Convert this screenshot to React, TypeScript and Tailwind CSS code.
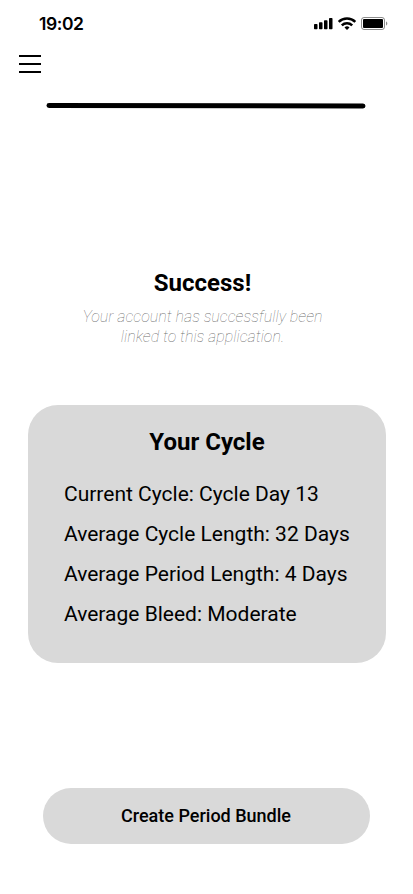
const cycleStats = [
  'Current Cycle: Cycle Day 13',
  'Average Cycle Length: 32 Days',
  'Average Period Length: 4 Days',
  'Average Bleed: Moderate',
];

function StatusIcons() {
  return (
    <svg width="74" height="14" viewBox="0 0 74 14" fill="none">
      <g fill="#000">
        <rect x="0" y="7" width="3.5" height="5.2" rx="0.7" />
        <rect x="5" y="5.2" width="3.5" height="7" rx="0.7" />
        <rect x="10" y="3.2" width="3.5" height="9" rx="0.7" />
        <rect x="15" y="1" width="3.5" height="11.2" rx="0.7" />
      </g>
      <g stroke="#000" strokeWidth="2.5">
        <path d="M24.7 4.8a12 12 0 0 1 16.6 0" />
        <path d="M27.8 8.3a7.6 7.6 0 0 1 10.4 0" />
      </g>
      <path d="M33 13l-2.5-2.6a3.8 3.8 0 0 1 5 0z" fill="#000" />
      <rect x="47.5" y="0.5" width="23" height="12" rx="2.5" stroke="#000" strokeOpacity="0.45" />
      <rect x="49" y="2" width="20" height="9" rx="1" fill="#000" />
      <path d="M72 4.5v4c.8-.3 1.3-1.1 1.3-2s-.5-1.7-1.3-2z" fill="#000" fillOpacity="0.45" />
    </svg>
  );
}

export default function App() {
  return (
    <div className="flex h-[894px] w-[413px] flex-col overflow-hidden bg-white font-['Roboto',sans-serif] text-black">
      {/* Status bar */}
      <div className="flex h-[47px] shrink-0 items-center justify-between pl-[39px] pr-[25px]">
        <span className="pt-px font-['Inter',sans-serif] text-[17.5px] font-semibold tracking-[-0.4px]">19:02</span>
        <StatusIcons />
      </div>

      {/* Menu */}
      <button className="ml-[19px] mt-[8px] flex h-[18px] w-[22px] shrink-0 flex-col justify-between" aria-label="Menu">
        <span className="h-[2px] w-full bg-black" />
        <span className="h-[2px] w-full bg-black" />
        <span className="h-[2px] w-full bg-black" />
      </button>

      {/* Progress */}
      <svg className="mt-[27px] shrink-0" width="413" height="10" viewBox="0 0 413 10">
        <path d="M49 5.5L363 6" stroke="#000" strokeWidth="5" strokeLinecap="round" />
      </svg>

      <div className="mt-[159px] shrink-0 pr-[8px] text-center">
        <h1 className="text-[24px] font-bold leading-[28px]">Success!</h1>
        <p className="mt-[10px] text-[16px] font-thin italic leading-[20px] text-black/60">
          Your account has successfully been
          <br />
          linked to this application.
        </p>
      </div>

      {/* Cycle summary */}
      <div className="ml-[28px] mt-[58px] h-[258px] w-[358px] shrink-0 rounded-[30px] bg-[#d9d9d9] pt-[23px]">
        <h2 className="text-center text-[24px] font-bold leading-[28px]">Your Cycle</h2>
        <ul className="mt-[18px] pl-[36px]">
          {cycleStats.map((stat) => (
            <li key={stat} className="whitespace-nowrap text-[21px] leading-[40px]">
              {stat}
            </li>
          ))}
        </ul>
      </div>

      <button className="ml-[43px] mt-[125px] h-[56px] w-[327px] shrink-0 rounded-full bg-[#d9d9d9] pb-[2px] pr-[1px] text-[18px] font-medium">
        Create Period Bundle
      </button>
    </div>
  );
}
